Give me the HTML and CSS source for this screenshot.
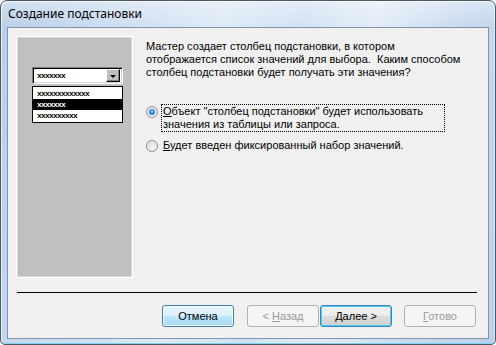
FILE: index.html
```html
<!DOCTYPE html>
<html lang="ru">
<head>
<meta charset="utf-8">
<title>Создание подстановки</title>
<link rel="stylesheet" href="styles.css">
</head>
<body>
<div class="window">
  <div class="titlebar"><span class="title">Создание подстановки</span></div>
  <div class="client">
    <div class="main">
      <div class="panel">
        <div class="combo">
          <span class="xx">xxxxxxx</span>
          <span class="drop"><i class="tri"></i></span>
        </div>
        <div class="list">
          <div class="row"><span class="xx">xxxxxxxxxxxxx</span></div>
          <div class="row sel"><span class="xx">xxxxxxx</span></div>
          <div class="row"><span class="xx">xxxxxxxxxx</span></div>
        </div>
      </div>
      <div class="content">
        <p class="intro">Мастер создает столбец подстановки, в котором<br>отображается список значений для выбора.&nbsp; Каким способом<br>столбец подстановки будет получать эти значения?</p>
        <div class="option first">
          <span class="radio"><i class="dot"></i></span>
          <span class="label focus"><u>О</u>бъект "столбец подстановки" будет использовать<br>значения из таблицы или запроса.</span>
        </div>
        <div class="option second">
          <span class="radio"></span>
          <span class="label"><u>Б</u>удет введен фиксированный набор значений.</span>
        </div>
      </div>
    </div>
    <div class="sep"></div>
    <div class="buttons">
      <button class="btn hot">Отмена</button>
      <button class="btn disabled gap-l">&lt; <u>Н</u>азад</button>
      <button class="btn default"><u>Д</u>алее &gt;</button>
      <button class="btn disabled gap-s"><u>Г</u>отово</button>
    </div>
  </div>
</div>
</body>
</html>
```

FILE: styles.css
```css
* { box-sizing: border-box; }
html, body { margin: 0; padding: 0; background: #ffffff; }
body { font-family: "Liberation Sans", Arial, sans-serif; font-size: 11px; color: #000; }

.window {
  width: 496px;
  height: 345px;
  border: 1px solid #4d5663;
  border-radius: 7px 7px 5px 5px;
  background:
    linear-gradient(to bottom, rgba(255,255,255,0.35) 0, rgba(255,255,255,0) 26px),
    linear-gradient(100deg, #b8cee8 0%, #c9dbf0 18%, #dde9f6 40%, #d2e2f3 55%, #e2ecf7 68%, #c7d9ee 85%, #bcd1ea 100%);
  box-shadow: inset 1px 1px 0 rgba(255,255,255,0.7), inset -1px 0 0 rgba(255,255,255,0.5), inset 0 -1px 0 #7fd3ee;
  display: flex;
  flex-direction: column;
  padding: 0 6px 5px 6px;
  overflow: hidden;
}

.titlebar {
  height: 26px;
  padding: 5px 0 0 1px;
  line-height: 16px;
}
.title {
  font-family: "Noto Sans", "Open Sans", sans-serif;
  font-size: 12px;
  color: #000;
}

.client {
  flex: 1;
  background: #f0f0f0;
  border: 1px solid #8094ae;
  display: flex;
  flex-direction: column;
}

.main {
  display: flex;
  padding: 8px 0 0 8px;
}

.panel {
  width: 117px;
  height: 242px;
  background: #c0c0c0;
  border: 1px solid #ffffff;
  outline: 1px solid #d8d8d8;
  outline-offset: -2px;
  padding: 30px 0 0 15px;
  display: flex;
  flex-direction: column;
}

.xx {
  font-family: "Liberation Mono", monospace;
  font-weight: bold;
  font-size: 8px;
  line-height: 8px;
  letter-spacing: -0.8px;
  display: block;
}

.combo {
  width: 91px;
  height: 17px;
  background: #fff;
  border-top: 1px solid #808080;
  border-left: 1px solid #808080;
  border-right: 1px solid #ffffff;
  border-bottom: 1px solid #ffffff;
  box-shadow: inset 1px 1px 0 #000, inset -1px -1px 0 #d4d4d4;
  display: flex;
  align-items: center;
  padding: 0 1px 0 4px;
}
.combo .xx { flex: 1; }
.drop {
  width: 14px;
  height: 13px;
  background: #c0c0c0;
  border-top: 1px solid #fff;
  border-left: 1px solid #fff;
  border-right: 1px solid #000;
  border-bottom: 1px solid #000;
  box-shadow: inset -1px -1px 0 #808080;
  display: flex;
  align-items: center;
  justify-content: center;
  margin-right: 1px;
}
.tri {
  display: block;
  width: 0;
  height: 0;
  border-left: 3px solid transparent;
  border-right: 3px solid transparent;
  border-top: 3px solid #000;
  margin: 1px 1px 0 0;
}

.list {
  margin-top: 2px;
  width: 91px;
  height: 37px;
  background: #fff;
  border: 1px solid #000;
  padding-top: 1px;
}
.row {
  height: 11px;
  display: flex;
  align-items: center;
  padding: 0 0 0 4px;
}
.row.sel { background: #000; color: #fff; }

.content {
  margin-left: 13px;
  padding-top: 4px;
}
.intro {
  margin: 0;
  line-height: 13px;
  white-space: nowrap;
}

.option {
  display: flex;
  align-items: flex-start;
  line-height: 13px;
  white-space: nowrap;
}
.option.first { margin-top: 25px; }
.option.second { margin-top: 6px; }

.radio {
  width: 12px;
  height: 12px;
  border-radius: 50%;
  border: 1px solid #8a8f94;
  background: radial-gradient(circle at 60% 65%, #f7f7f7 0%, #e6e6e6 45%, #cfcfcf 100%);
  box-shadow: inset 0 0 0 1px #f4f4f4;
  margin-top: 2px;
  margin-right: 3px;
  display: flex;
  align-items: center;
  justify-content: center;
}
.dot {
  display: block;
  width: 6px;
  height: 6px;
  border-radius: 50%;
  background: radial-gradient(circle at 50% 40%, #7fd3ff 0%, #2f86d8 50%, #16508f 100%);
}

.label {
  border: 1px solid transparent;
  padding: 0 1px;
}
.label.focus {
  width: 284px;
  border: 1px dotted #000;
}

.sep {
  margin: 14px 11px 0 9px;
  height: 1px;
  background: #000;
}

.buttons {
  display: flex;
  justify-content: flex-end;
  padding-right: 12px;
  margin-top: 12px;
}
.btn {
  width: 72px;
  height: 22px;
  font-family: "Liberation Sans", Arial, sans-serif;
  font-size: 11px;
  font-weight: normal;
  color: #000;
  border: 1px solid #707070;
  border-radius: 3px;
  background: linear-gradient(to bottom, #f2f2f2 0%, #ebebeb 50%, #dddddd 50%, #cfcfcf 100%);
  box-shadow: inset 0 0 0 1px #fbfbfb;
  padding: 0;
  margin-left: 1px;
}
.btn.hot {
  border-color: #3c7fb1;
  background: linear-gradient(to bottom, #eaf6fd 0%, #d9f0fc 50%, #bee6fd 50%, #a7d9f5 100%);
}
.btn.default {
  border-color: #3c7fb1;
  box-shadow: inset 0 0 0 1px #48d0fc;
}
.btn.disabled {
  color: #9a9a9a;
  border-color: #adb2b5;
  background: #f4f4f4;
  box-shadow: none;
}
.btn.gap-l { margin-left: 13px; }
.btn.gap-s { margin-left: 12px; }
```
